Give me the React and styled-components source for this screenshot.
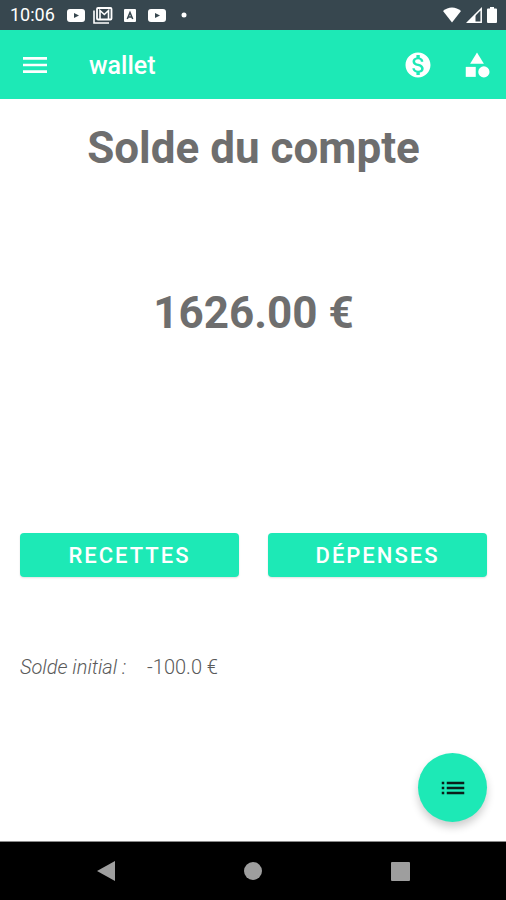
import React from 'react'
import styled, { createGlobalStyle } from "styled-components"
import { MdMenu, MdMonetizationOn, MdCategory, MdList } from "react-icons/md"

const GlobalStyle = createGlobalStyle`
  * {
    box-sizing: border-box;
  }
  body {
    margin: 0;
    background: #fff;
    font-family: Roboto, sans-serif;
  }
  button {
    margin: 0;
    padding: 0;
    border: none;
    font-family: inherit;
    cursor: pointer;
  }
`;

const Screen = styled.div`
  display: flex;
  flex-direction: column;
  min-height: 100vh;
`;

const StatusBar = styled.div`
  display: flex;
  align-items: center;
  justify-content: space-between;
  height: 30px;
  padding: 0 9px 0 10px;
  background: #37474f;
  color: #fff;
`;

const StatusGroup = styled.div`
  display: flex;
  align-items: center;
  gap: ${(props) => props.$gap};
`;

const Notification = styled.span`
  display: flex;
  justify-content: center;
  width: 27px;
`;

const Clock = styled.span`
  margin-right: 8px;
  font-size: 18px;
  line-height: 30px;
`;

const Header = styled.header`
  display: flex;
  align-items: center;
  height: 69px;
  padding: 0 14px 0 19px;
  background: #1de9b6;
  color: #fff;
`;

const Title = styled.h1`
  flex: 1;
  margin: 0 0 0 38px;
  padding-top: 2px;
  font-size: 25px;
  font-weight: 500;
  line-height: 32px;
`;

const IconButton = styled.button`
  display: flex;
  background: none;
  color: inherit;
`;

const Actions = styled.div`
  display: flex;
  align-items: center;
  gap: 29px;
`;

const Main = styled.main`
  position: relative;
  flex: 1;
  padding: 23px 19px 0 20px;
  color: #6e6e6e;
`;

const Heading = styled.h2`
  margin: 0;
  font-size: 44px;
  font-weight: 700;
  line-height: 52px;
  text-align: center;
`;

const Balance = styled.p`
  margin: 113px 0 0;
  font-size: 44px;
  font-weight: 700;
  line-height: 52px;
  text-align: center;
`;

const ButtonRow = styled.div`
  display: grid;
  grid-template-columns: 1fr 1fr;
  gap: 29px;
  margin-top: 194px;
`;

const Button = styled.button`
  height: 44px;
  border-radius: 4px;
  background: #1de9b6;
  box-shadow: 0 1px 2px rgba(0, 0, 0, 0.12);
  color: #fff;
  font-size: 22px;
  font-weight: 500;
  letter-spacing: 2px;
  text-transform: uppercase;
`;

const Initial = styled.p`
  display: flex;
  gap: 21px;
  margin: 78px 0 0;
  color: #5a5a5a;
  font-size: 20px;
  font-weight: 300;
  line-height: 24px;
`;

const Fab = styled.button`
  position: absolute;
  right: 19px;
  bottom: 19px;
  display: flex;
  align-items: center;
  justify-content: center;
  width: 69px;
  height: 69px;
  border-radius: 50%;
  background: #1de9b6;
  box-shadow: 0 5px 9px rgba(0, 0, 0, 0.2);
  color: #0b1f1a;
`;

const NavBar = styled.nav`
  display: grid;
  grid-template-columns: repeat(3, 1fr);
  height: 59px;
  padding: 0 32px;
  border-top: 1px solid #8a8a8a;
  background: #000;
`;

const NavButton = styled.button`
  display: flex;
  align-items: center;
  justify-content: center;
  background: none;
`;

const Video = () => (
  <svg width="18" height="13" viewBox="0 0 18 13">
    <rect width="18" height="13" rx="3" fill="#fff" />
    <path d="M7 4l5 2.5L7 9z" fill="#37474f" />
  </svg>
);

const Mail = () => (
  <svg width="20" height="17" viewBox="0 0 20 17" fill="none" stroke="#fff">
    <path d="M1 3.500V16H16" strokeWidth="1.600" />
    <rect x="4" y="1" width="14.500" height="11.500" rx="1" strokeWidth="1.800" />
    <path d="M7 12V3.500L11.300 7.500L15.500 3.500V12" strokeWidth="1.600" />
  </svg>
);

const Keyboard = () => (
  <svg width="12" height="13" viewBox="0 0 12 13">
    <rect width="12" height="13" rx="1" fill="#fff" />
    <path d="M3.300 10L6 3.500L8.700 10M4.300 8H7.700" fill="none" stroke="#37474f" strokeWidth="1.500" />
  </svg>
);

const Dot = () => (
  <svg width="6" height="6" viewBox="0 0 6 6">
    <circle cx="3" cy="3" r="2.500" fill="#fff" />
  </svg>
);

const Wifi = () => (
  <svg width="18" height="16" viewBox="0 0 18 16">
    <path d="M0 4C5 -0.800 13 -0.800 18 4L9 15.500z" fill="#fff" />
  </svg>
);

const Signal = () => (
  <svg width="16" height="16" viewBox="0 0 16 16">
    <path d="M1.800 15.200H15.200V1.800z" fill="none" stroke="#fff" strokeWidth="1.500" />
    <path d="M1 15.500L9.500 7V15.500z" fill="#fff" />
  </svg>
);

const Battery = () => (
  <svg width="10" height="16" viewBox="0 0 10 16">
    <path d="M3 0H7V1.500H9Q10 1.500 10 2.500V15Q10 16 9 16H1Q0 16 0 15V2.500Q0 1.500 1 1.500H3z" fill="#fff" />
  </svg>
);

const App = () => {
  return (
    <Screen>
      <GlobalStyle />
      <StatusBar>
        <StatusGroup $gap="0">
          <Clock>10:06</Clock>
          <Notification><Video /></Notification>
          <Notification><Mail /></Notification>
          <Notification><Keyboard /></Notification>
          <Notification><Video /></Notification>
          <Notification><Dot /></Notification>
        </StatusGroup>
        <StatusGroup $gap="5px">
          <Wifi />
          <Signal />
          <Battery />
        </StatusGroup>
      </StatusBar>

      <Header>
        <IconButton aria-label="Menu">
          <MdMenu size={32} />
        </IconButton>
        <Title>wallet</Title>
        <Actions>
          <IconButton aria-label="Devise">
            <MdMonetizationOn size={30} />
          </IconButton>
          <IconButton aria-label="Catégories">
            <MdCategory size={30} />
          </IconButton>
        </Actions>
      </Header>

      <Main>
        <Heading>Solde du compte</Heading>
        <Balance>1626.00 €</Balance>
        <ButtonRow>
          <Button>Recettes</Button>
          <Button>Dépenses</Button>
        </ButtonRow>
        <Initial>
          <em>Solde initial :</em>
          <span>-100.0 €</span>
        </Initial>
        <Fab aria-label="Liste">
          <MdList size={30} />
        </Fab>
      </Main>

      <NavBar>
        <NavButton aria-label="Retour">
          <svg width="18" height="20" viewBox="0 0 18 20">
            <path d="M0 10L18 0V20z" fill="#9e9e9e" />
          </svg>
        </NavButton>
        <NavButton aria-label="Accueil">
          <svg width="18" height="18" viewBox="0 0 18 18">
            <circle cx="9" cy="9" r="9" fill="#9e9e9e" />
          </svg>
        </NavButton>
        <NavButton aria-label="Applications">
          <svg width="19" height="19" viewBox="0 0 19 19">
            <rect width="19" height="19" rx="1" fill="#9e9e9e" />
          </svg>
        </NavButton>
      </NavBar>
    </Screen>
  );
}

export default App
